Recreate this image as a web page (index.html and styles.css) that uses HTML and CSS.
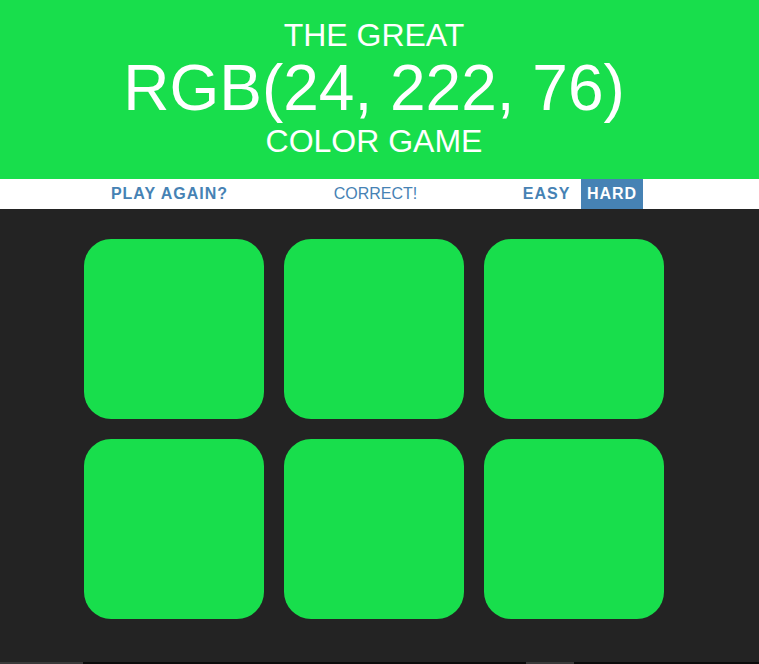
FILE: index.html
```html
<!DOCTYPE html>
<html>
<head>
<meta charset="utf-8">
<title>Color Game</title>
<link rel="stylesheet" href="styles.css">
</head>
<body>
<div class="page">
  <h1 class="title">
    <span class="line-small">The Great</span>
    <span class="color-display">RGB(24, 222, 76)</span>
    <span class="line-small">Color Game</span>
  </h1>
  <div class="stripe">
    <button class="btn">Play Again?</button>
    <span class="message">Correct!</span>
    <button class="btn">Easy</button>
    <button class="btn selected">Hard</button>
  </div>
  <div class="grid">
    <div class="square"></div>
    <div class="square"></div>
    <div class="square"></div>
    <div class="square"></div>
    <div class="square"></div>
    <div class="square"></div>
  </div>
</div>
<div class="bottom-strip">
  <div class="seg seg-a"></div>
  <div class="seg seg-b"></div>
  <div class="seg seg-c"></div>
  <div class="seg seg-d"></div>
</div>
</body>
</html>
```
FILE: styles.css
```css
html, body {
  margin: 0;
  padding: 0;
  height: 664px;
  overflow: hidden;
}
body {
  background: #232323;
  font-family: "Liberation Sans", Arial, sans-serif;
}
.page {
  width: 759px;
}
.title {
  margin: 0;
  background: rgb(24, 222, 76);
  color: #ffffff;
  font-weight: normal;
  text-align: center;
  text-transform: uppercase;
  line-height: 1.1;
  font-size: 32px;
  padding: 18px 11px 20px 0;
  height: 141px;
  display: flex;
  flex-direction: column;
  align-items: center;
}
.title span {
  display: block;
}
.color-display {
  font-size: 64px;
}
.stripe {
  background: #ffffff;
  height: 30px;
  width: 748px;
  display: flex;
  justify-content: center;
  align-items: stretch;
  gap: 4.45px;
  box-shadow: 11px 0 0 #ffffff;
}
.btn {
  border: none;
  background: none;
  text-transform: uppercase;
  height: 100%;
  font-family: "Liberation Sans", Arial, sans-serif;
  font-weight: 700;
  font-size: 16px;
  letter-spacing: 1px;
  color: steelblue;
  padding: 0 6px;
  margin: 0;
  cursor: pointer;
}
.btn.selected {
  background: steelblue;
  color: #ffffff;
}
.message {
  width: 274px;
  text-align: center;
  text-transform: uppercase;
  color: steelblue;
  font-size: 16px;
  display: flex;
  align-items: center;
  justify-content: center;
}
.grid {
  width: 748px;
  display: grid;
  grid-template-columns: repeat(3, 180px);
  grid-auto-rows: 180px;
  gap: 20px;
  justify-content: center;
  padding: 30px 0 43px;
}
.square {
  background: rgb(24, 222, 76);
  border-radius: 27px;
}
.bottom-strip {
  display: flex;
  height: 2px;
  background: #0b0b0b;
}
.seg-a {
  width: 83px;
  background: #3a3a3a;
}
.seg-b {
  width: 443px;
}
.seg-c {
  width: 48px;
  background: #3a3a3a;
}
```
